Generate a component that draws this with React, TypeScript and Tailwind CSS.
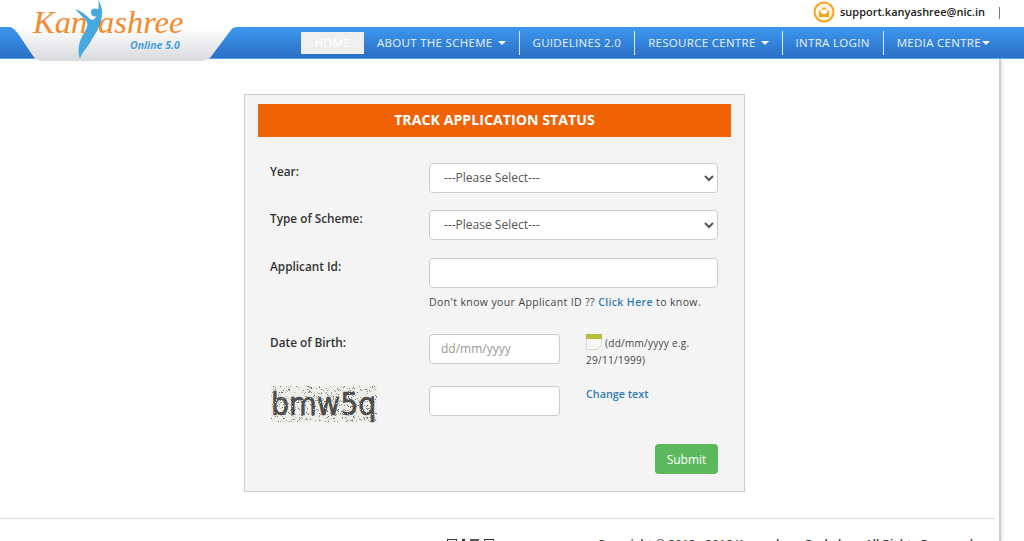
import React from "react";

const navItems = [
  { label: "ABOUT THE SCHEME", caret: true },
  { label: "GUIDELINES 2.0", caret: false },
  { label: "RESOURCE CENTRE", caret: true },
  { label: "INTRA LOGIN", caret: false },
];

// speckle dots for the captcha, light ones go over the word
const noise = (i: number, seed: number) => {
  const v = Math.sin(i * 12.9898 + seed * 78.233) * 43758.5453;
  return v - Math.floor(v);
};
const speckles = Array.from({ length: 520 }, (_, i) => ({
  x: Math.floor(noise(i, 1) * 106),
  y: Math.floor(noise(i, 2) * 36),
  o: 0.3 + noise(i, 3) * 0.6,
}));
const holes = Array.from({ length: 160 }, (_, i) => ({
  x: Math.floor(noise(i, 4) * 106),
  y: Math.floor(noise(i, 5) * 36),
}));

function Caret() {
  return <span className="ml-[5px] inline-block border-x-[4px] border-t-[4px] border-x-transparent border-t-white align-middle" />;
}

function Logo() {
  return (
    <div className="absolute left-0 top-0 h-[61px] w-[250px]">
      <svg className="absolute left-0 top-[27px]" width="250" height="34" viewBox="0 0 250 34">
        <defs>
          <linearGradient id="logoBg" x1="0" y1="0" x2="0" y2="1">
            <stop offset="0" stopColor="#ffffff" />
            <stop offset="1" stopColor="#d9dadd" />
          </linearGradient>
        </defs>
        <path d="M10 0 C14 1 16 4 19 8 L33 29 C35 32 38 34 43 34 L200 34 C206 34 210 32 213 27 L231 3 C232 1 234 0 238 0 L10 0 Z" fill="url(#logoBg)" />
      </svg>
      <svg className="absolute left-[75px] top-0" width="30" height="60" viewBox="0 0 30 60">
        <circle cx="20" cy="12.5" r="4" fill="#45a8de" />
        <path d="M0 9 C6 11 11 15 15 19 C18 21 21 19 22 14 C24 8 24 4 23 0 C27 5 28 13 26 21 C24 29 20 34 16 41 C13 47 7 52 5 59 C2 50 4 41 9 33 C12 28 13 25 12 22 C8 17 4 13 0 9 Z" fill="#45a8de" />
      </svg>
      <span className="absolute left-[33px] top-[7px] font-['Liberation_Serif',serif] text-[32.5px] italic leading-[31px] text-[#f58a2e]">Kan</span>
      <span className="absolute left-[98px] top-[7px] font-['Liberation_Serif',serif] text-[32.5px] italic leading-[31px] text-[#f58a2e]">ashree</span>
      <span className="absolute left-[130px] top-[39px] font-['Open_Sans',sans-serif] text-[10.5px] font-bold italic leading-[13px] text-[#4a9fdc]">Online 5.0</span>
    </div>
  );
}

function Header() {
  return (
    <header className="relative">
      <div className="flex h-[27px] items-start justify-end bg-white pr-[24px] pt-[1px]">
        <svg width="22" height="22" viewBox="0 0 22 22" className="mr-[5px]">
          <circle cx="11" cy="11" r="9.5" fill="#fff6e5" stroke="#f9a51a" strokeWidth="2" />
          <path d="M6 10 L11 6 L16 10 V16 H6 Z" fill="#f9a51a" />
          <path d="M7.5 8.5 H14.5 V11.5 L11 13.5 L7.5 11.5 Z" fill="#fff" />
        </svg>
        <span className="mt-[4px] text-[11px] font-semibold leading-[14px] text-[#222]">support.kanyashree@nic.in</span>
        <span className="ml-[14px] mt-[6px] h-[12px] w-[1px] bg-[#777]" />
      </div>
      <nav className="flex h-[32px] items-center border-b border-[#5aa7f0] bg-gradient-to-b from-[#3e97ef] to-[#2a70c6] pl-[301px] text-[11.5px] leading-[24px] tracking-[0.3px] text-[#eaf3fc]">
        <a className="h-[22px] w-[63px] bg-[#efefef] text-center leading-[22px] text-white">HOME</a>
        {navItems.map((item) => (
          <a key={item.label} className="flex h-[24px] items-center whitespace-nowrap border-r border-[#dbe9f8] px-[13px]">
            {item.label}
            {item.caret && <Caret />}
          </a>
        ))}
        <a className="flex h-[24px] items-center whitespace-nowrap pl-[13px]">
          MEDIA CENTRE
          <span className="ml-[1px] inline-block border-x-[4px] border-t-[4px] border-x-transparent border-t-white" />
        </a>
      </nav>
      <Logo />
    </header>
  );
}

function Select() {
  return (
    <select className="h-[30px] w-[289px] rounded-[4px] border border-[#ccc] bg-white pb-[2px] pl-[10px] text-[12px] text-[#555]">
      <option>---Please Select---</option>
    </select>
  );
}

function TextBox({ width, placeholder }: { width: string; placeholder?: string }) {
  return (
    <input
      placeholder={placeholder}
      className={`h-[30px] ${width} rounded-[4px] border border-[#ccc] bg-white px-[11px] pb-[2px] text-[12px] text-[#555] placeholder:text-[#999]`}
    />
  );
}

function Captcha() {
  return (
    <div className="relative h-[36px] w-[106px] bg-[#eeeee8]">
      <svg className="absolute inset-0" width="106" height="36">
        {speckles.map((s, i) => (
          <rect key={i} x={s.x} y={s.y} width="1" height="1" fill="#555" opacity={s.o} />
        ))}
      </svg>
      <span className="absolute left-0 top-[3px] origin-top scale-y-[1.12] font-['DejaVu_Sans',sans-serif] text-[28.5px] leading-[28px] text-[#4c4c4c] [-webkit-text-stroke:0.6px_#4c4c4c]">bmw5q</span>
      <svg className="absolute inset-0" width="106" height="36">
        {holes.map((s, i) => (
          <rect key={i} x={s.x} y={s.y} width="1" height="1" fill="#f1f1ec" opacity="0.8" />
        ))}
      </svg>
    </div>
  );
}

function TrackForm() {
  return (
    <section className="ml-[244px] h-[398px] w-[501px] border border-[#ccc] bg-[#f4f4f4] px-[13px] pt-[9px] text-[#333]">
      <h2 className="h-[33px] w-[473px] bg-[#f06305] text-center text-[14.2px] font-bold leading-[32px] text-white">TRACK APPLICATION STATUS</h2>
      <div className="grid grid-cols-[171px_131px_158px] pt-[26px] text-[11.8px]">
        <label className="pl-[12px] font-semibold leading-[16px]">Year:</label>
        <div className="col-span-2 h-[47px]"><Select /></div>

        <label className="pl-[12px] font-semibold leading-[16px]">Type of Scheme:</label>
        <div className="col-span-2 h-[48px]"><Select /></div>

        <label className="pl-[12px] font-semibold leading-[16px]">Applicant Id:</label>
        <div className="col-span-2 h-[76px]">
          <TextBox width="w-[289px]" />
          <p className="mt-[6px] text-[10.5px] leading-[16px] tracking-[0.38px] text-[#444]">
            Don't know your Applicant ID ?? <a className="font-semibold text-[#337ab7]">Click Here</a> to know.
          </p>
        </div>

        <label className="pl-[12px] font-semibold leading-[16px]">Date of Birth:</label>
        <div className="h-[52px]"><TextBox width="w-[131px]" placeholder="dd/mm/yyyy" /></div>
        <p className="pl-[26px] text-[10px] leading-[17px] tracking-[0.28px] text-[#444]">
          <svg className="mr-[3px] inline-block align-[-3px]" width="16" height="16" viewBox="0 0 16 16">
            <path d="M0.5 1 H15.5 V11 L11 15.5 H0.5 Z" fill="#f7f7f2" stroke="#cfcfc8" strokeWidth="0.7" />
            <rect x="0" y="0" width="16" height="5" fill="#b5bd3a" />
          </svg>
          (dd/mm/yyyy e.g. 29/11/1999)
        </p>

        <div className="pl-[13px]"><Captcha /></div>
        <div className="h-[58px]"><TextBox width="w-[131px]" /></div>
        <a className="pl-[26px] text-[10.8px] font-semibold leading-[16px] text-[#337ab7]">Change text</a>
      </div>
      <div className="flex justify-end pr-[13px]">
        <button className="h-[30px] w-[63px] rounded-[4px] bg-[#5cb85c] pt-[1px] text-[12px] text-white">Submit</button>
      </div>
    </section>
  );
}

function Footer() {
  return (
    <footer className="mt-[26px] w-[995px] border-t border-[#ddd]">
      <div className="flex pl-[447px] pt-[17px] text-[11.8px] font-semibold leading-[16px] text-[#333]">
        <div className="flex w-[150px] gap-[5px] pt-[3px]">
          <span className="h-[9px] w-[10px] border border-[#333]" />
          <span className="h-[9px] w-[3px] bg-[#333]" />
          <span className="h-[9px] w-[9px] bg-[#555]" />
          <span className="h-[9px] w-[10px] border border-[#333]" />
        </div>
        <span className="whitespace-nowrap">Copyright © 2012 - 2016 Kanyashree Prakalpa . All Rights Reserved</span>
      </div>
    </footer>
  );
}

export default function App() {
  return (
    <div className="h-[541px] w-[1024px] overflow-hidden bg-white font-['Open_Sans',sans-serif]">
      <Header />
      <main className="h-[482px] w-[1001px] border-r-2 border-[#ccc] pt-[35px] shadow-[1px_0_3px_#ddd]">
        <TrackForm />
        <Footer />
      </main>
    </div>
  );
}
